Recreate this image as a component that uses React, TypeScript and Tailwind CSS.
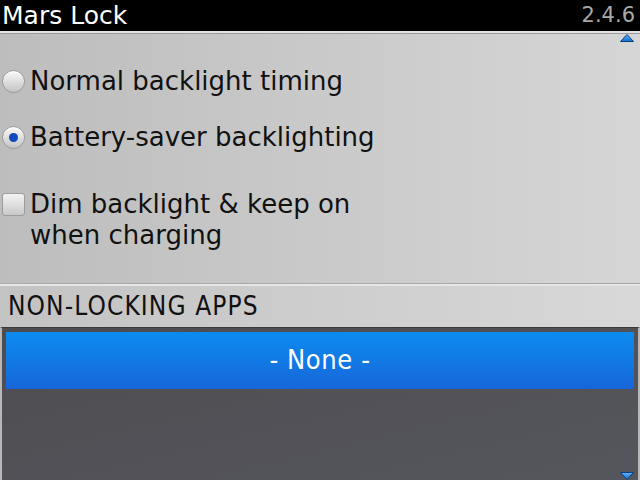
import _React from "react";

const Radio = ({ checked }: { checked?: boolean }) => (
  <span className="flex h-[23px] w-[23px] shrink-0 items-center justify-center rounded-full border border-[#9a9a9a] bg-gradient-to-b from-[#fafafa] to-[#c4c4c4] shadow-[inset_0_1px_0_#fff]">
    {checked && <span className="h-[9px] w-[9px] rounded-full bg-[#0f4bbd]" />}
  </span>
);

const Arrow = ({ down }: { down?: boolean }) => (
  <svg width="14" height="8" viewBox="0 0 14 8">
    <defs>
      <linearGradient id={down ? "ad" : "au"} x1="0" y1="0" x2="0" y2="1">
        <stop offset="0" stopColor="#5cb4ff" />
        <stop offset="1" stopColor="#0e6fd6" />
      </linearGradient>
    </defs>
    <polygon
      points={down ? "0.5,0.5 13.5,0.5 7,7.5" : "7,0.5 13.5,7.5 0.5,7.5"}
      fill={`url(#${down ? "ad" : "au"})`}
      stroke="#0b3f7a"
      strokeWidth="1"
    />
  </svg>
);

const App = () => {
  return (
    <div className="flex h-[480px] w-[640px] flex-col overflow-hidden bg-[#c6c6c6] [font-family:'DejaVu_Sans','Liberation_Sans',sans-serif]">
      {/* Title bar */}
      <div className="flex h-[31px] shrink-0 items-center justify-between bg-black pl-[2px] pr-[5px]">
        <span className="text-[25px] leading-none text-white">Mars Lock</span>
        <span className="text-[21px] leading-none text-[#a8a8a8]">2.4.6</span>
      </div>
      <div className="h-[2px] shrink-0 bg-[#e2e2e2]" />
      <div className="h-px shrink-0 bg-[#9c9c9c]" />

      {/* Options */}
      <div className="relative flex h-[249px] shrink-0 flex-col bg-gradient-to-r from-[#bdbdbd] to-[#d6d6d6] pl-[2px] text-[26px] text-[#111]">
        <div className="absolute right-[6px] top-0">
          <Arrow />
        </div>
        <div className="mt-[32px] flex h-[30px] items-center gap-[5px]">
          <Radio />
          <span>Normal backlight timing</span>
        </div>
        <div className="mt-[26px] flex h-[30px] items-center gap-[5px]">
          <Radio checked />
          <span>Battery-saver backlighting</span>
        </div>
        <div className="mt-[37px] flex items-start gap-[5px]">
          <span className="mt-[4px] h-[23px] w-[23px] shrink-0 rounded-[3px] border border-[#9c9c9c] bg-gradient-to-b from-[#f4f4f4] to-[#c9c9c9]" />
          <span className="leading-[31px]">
            Dim backlight &amp; keep on
            <br />
            when charging
          </span>
        </div>
      </div>
      <div className="h-px shrink-0 bg-[#a9a9a9]" />
      <div className="h-[2px] shrink-0 bg-[#e6e6e6]" />

      {/* Section header */}
      <div className="flex h-[41px] shrink-0 items-center bg-gradient-to-r from-[#c3c3c3] to-[#d8d8d8] pl-[8px] pb-[1px] text-[26px] tracking-[1.1px] text-[#111] [font-family:'DejaVu_Sans_Condensed','DejaVu_Sans',sans-serif]">
        NON-LOCKING APPS
      </div>

      {/* List */}
      <div className="relative flex flex-1 flex-col border-l-2 border-r-2 border-t border-l-[#b8b8b8] border-r-[#b8b8b8] border-t-[#3a3a3a] bg-gradient-to-br from-[#4c4c50] to-[#56565e] px-[4px] pt-[4px]">
        <div className="flex h-[57px] items-center justify-center bg-gradient-to-b from-[#0b8cf0] to-[#1766d9] text-[27px] tracking-[0.6px] text-white [font-family:'DejaVu_Sans_Condensed','DejaVu_Sans',sans-serif]">
          - None -
        </div>
        <div className="absolute bottom-0 right-[4px]">
          <Arrow down />
        </div>
      </div>
    </div>
  );
};

export default App;
